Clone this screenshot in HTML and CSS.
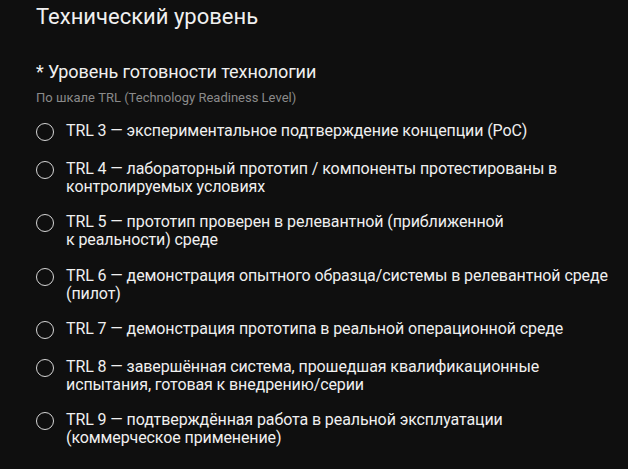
FILE: index.html
```html
<!DOCTYPE html>
<html lang="ru">
<head>
<meta charset="utf-8">
<link rel="stylesheet" href="styles.css">
</head>
<body>
<main class="page">
  <h1 class="title">Технический уровень</h1>
  <section class="field">
    <h2 class="label">* Уровень готовности технологии</h2>
    <p class="hint">По шкале TRL (Technology Readiness Level)</p>
    <div class="options">
      <label class="option"><span class="radio"></span><span class="text">TRL 3 — экспериментальное подтверждение концепции (PoC)</span></label>
      <label class="option"><span class="radio"></span><span class="text">TRL 4 — лабораторный прототип / компоненты протестированы в контролируемых условиях</span></label>
      <label class="option"><span class="radio"></span><span class="text">TRL 5 — прототип проверен в релевантной (приближенной к&nbsp;реальности) среде</span></label>
      <label class="option"><span class="radio"></span><span class="text">TRL 6 — демонстрация опытного образца/системы в релевантной среде (пилот)</span></label>
      <label class="option"><span class="radio"></span><span class="text">TRL 7 — демонстрация прототипа в реальной операционной среде</span></label>
      <label class="option"><span class="radio"></span><span class="text">TRL 8 — завершённая система, прошедшая квалификационные испытания, готовая к внедрению/серии</span></label>
      <label class="option"><span class="radio"></span><span class="text">TRL 9 — подтверждённая работа в реальной эксплуатации (коммерческое применение)</span></label>
    </div>
  </section>
</main>
</body>
</html>
```

FILE: styles.css
```css
html, body {
  margin: 0;
  padding: 0;
  background: #0f0f0f;
}
body {
  font-family: Roboto, "Noto Sans", sans-serif;
  color: #f0f0f0;
}
.page {
  width: 573px;
  padding: 4px 19px 0 36px;
}
.title {
  margin: 0;
  font-size: 22px;
  font-weight: 400;
  line-height: 26px;
}
.field {
  margin-top: 31px;
}
.label {
  margin: 0;
  font-size: 18px;
  font-weight: 400;
  line-height: 22px;
  letter-spacing: -0.1px;
}
.hint {
  margin: 7px 0 0;
  font-size: 13px;
  line-height: 16px;
  color: #8a8a8a;
}
.options {
  display: flex;
  flex-direction: column;
  gap: 17.5px;
  margin-top: 16px;
}
.option {
  display: flex;
  align-items: flex-start;
  gap: 12px;
  min-height: 20px;
  font-size: 16px;
  line-height: 18px;
  letter-spacing: -0.1px;
}
.radio {
  flex: none;
  box-sizing: border-box;
  width: 18px;
  height: 18px;
  margin-top: 1px;
  border: 1.4px solid #d6d6d6;
  border-radius: 50%;
}
.text {
  flex: 1;
}
```
